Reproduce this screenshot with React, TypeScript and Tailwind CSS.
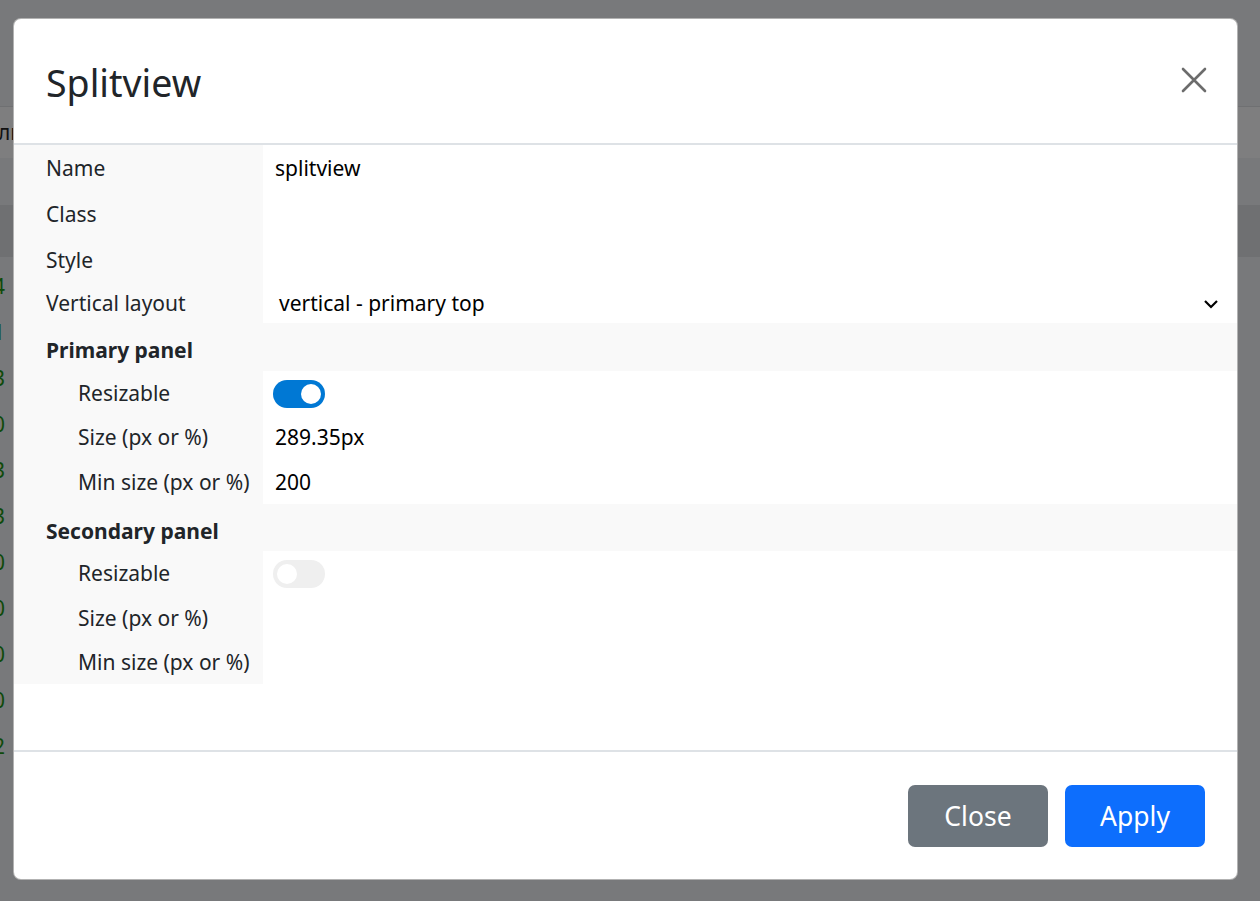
import React from "react";

const font = { fontFamily: '"Noto Sans", "Open Sans", sans-serif' };

function Toggle({ on }: { on: boolean }) {
  return on ? (
    <div className="-ml-[2px] w-[52px] h-[28px] rounded-full bg-[#0078d4] flex items-center justify-end px-[4px]">
      <div className="w-[20px] h-[20px] rounded-full bg-white" />
    </div>
  ) : (
    <div className="-ml-[2px] w-[52px] h-[28px] rounded-full bg-[#efefef] flex items-center justify-start px-[4px]">
      <div className="w-[20px] h-[20px] rounded-full bg-white" />
    </div>
  );
}

type Row =
  | { kind: "prop"; label: string; value?: React.ReactNode; h: string; indent?: boolean }
  | { kind: "group"; label: string; h: string };

const rows: Row[] = [
  { kind: "prop", label: "Name", value: "splitview", h: "h-[46px]" },
  { kind: "prop", label: "Class", h: "h-[46px]" },
  { kind: "prop", label: "Style", h: "h-[46px]" },
  { kind: "prop", label: "Vertical layout", value: "select", h: "h-[40px]" },
  { kind: "group", label: "Primary panel", h: "h-[48px]" },
  { kind: "prop", label: "Resizable", value: <Toggle on={true} />, h: "h-[43px]", indent: true },
  { kind: "prop", label: "Size (px or %)", value: "289.35px", h: "h-[45px]", indent: true },
  { kind: "prop", label: "Min size (px or %)", value: "200", h: "h-[45px]", indent: true },
  { kind: "group", label: "Secondary panel", h: "h-[47px]" },
  { kind: "prop", label: "Resizable", value: <Toggle on={false} />, h: "h-[44px]", indent: true },
  { kind: "prop", label: "Size (px or %)", h: "h-[45px]", indent: true },
  { kind: "prop", label: "Min size (px or %)", h: "h-[44px]", indent: true },
];

const digits = ["4", "1", "3", "0", "3", "3", "0", "0", "0", "0", "2"];

export default function App() {
  return (
    <div className="relative w-[1260px] h-[901px] overflow-hidden bg-[#78797b]" style={font}>
      {/* background page (dimmed) */}
      <div className="flex flex-col">
        <div className="h-[107px] border-b border-[#6f7072]" />
        <div className="h-[51px] bg-[#7e7e7f] flex items-center text-[21px] text-[#111]">
          <span className="-ml-[2px]">ли</span>
        </div>
        <div className="h-[47px]" />
        <div className="h-[52px] bg-[#6f7072]" />
        <div className="flex flex-col text-[21px] text-[#0f4a0a] mt-[7px]">
          {digits.map((d, i) => (
            <div key={i} className="h-[46px] flex items-center -ml-[7px]">
              {d}
            </div>
          ))}
        </div>
      </div>

      {/* modal */}
      <div className="absolute left-[13px] top-[18px] w-[1225px] h-[862px] bg-white rounded-[8px] border border-black/30 flex flex-col overflow-hidden text-[#212529]">
        <div className="h-[126px] shrink-0 border-b-2 border-[#dee2e6] flex items-center justify-between pl-[32px] pr-[30px]">
          <div className="text-[37.5px] leading-none mt-[4px]">Splitview</div>
          <svg width="26" height="26" viewBox="0 0 26 26" className="-mt-[3px]">
            <path d="M2 2 L24 24 M24 2 L2 24" stroke="#6c6c6c" strokeWidth="2.6" strokeLinecap="round" />
          </svg>
        </div>
        <div className="flex-1 flex flex-col text-[21px]">
          {rows.map((r, i) =>
            r.kind === "group" ? (
              <div key={i} className={`${r.h} bg-[#f9f9f9] flex items-center pl-[32px] pt-[8px] font-bold`}>
                {r.label}
              </div>
            ) : (
              <div key={i} className={`${r.h} flex`}>
                <div className={`w-[249px] shrink-0 bg-[#f9f9f9] flex items-center pt-[2px] ${r.indent ? "pl-[64px]" : "pl-[32px]"}`}>
                  {r.label}
                </div>
                <div className="flex-1 flex items-center pt-[2px] pl-[12px] pr-[18px] text-black">
                  {r.value === "select" ? (
                    <div className="flex-1 flex items-center justify-between pl-[4px]">
                      <span>vertical - primary top</span>
                      <svg width="16" height="12" viewBox="0 0 16 12">
                        <path d="M2 3 L8 9 L14 3" stroke="#000" strokeWidth="2.2" fill="none" />
                      </svg>
                    </div>
                  ) : (
                    r.value
                  )}
                </div>
              </div>
            )
          )}
        </div>
        <div className="h-[129px] shrink-0 border-t-2 border-[#dee2e6] flex items-center justify-end gap-[17px] pr-[32px]">
          <button className="w-[140px] h-[62px] pt-[3px] rounded-[7px] bg-[#6c757d] text-white text-[26.5px]">Close</button>
          <button className="w-[140px] h-[62px] pt-[3px] rounded-[7px] bg-[#0d6efd] text-white text-[26.5px]">Apply</button>
        </div>
      </div>
    </div>
  );
}
